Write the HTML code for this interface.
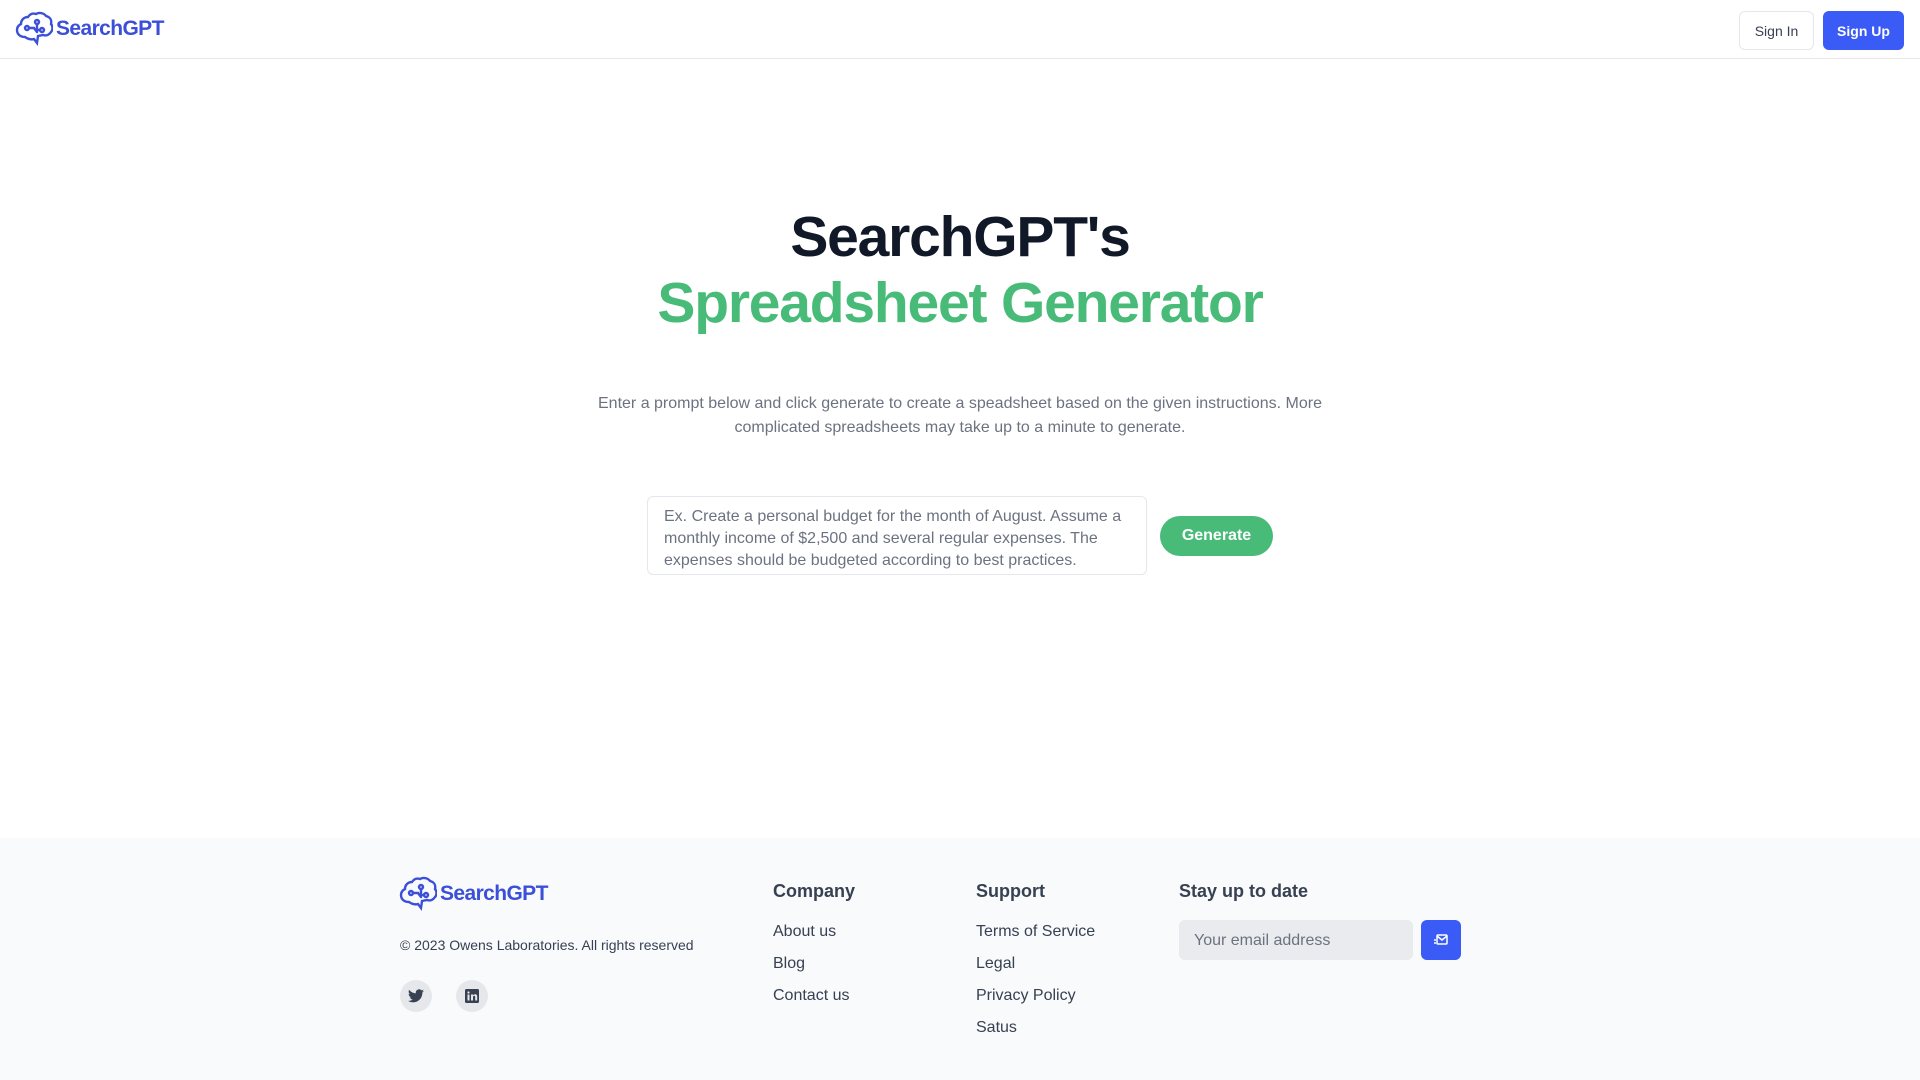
<!DOCTYPE html>
<html><head><meta charset="utf-8"><style>
*{box-sizing:border-box;margin:0;padding:0}
body{width:1920px;height:1080px;overflow:hidden;font-family:"Liberation Sans",sans-serif;background:#fff;color:#1f2937;position:relative}
.abs{position:absolute}
header{position:absolute;left:0;top:0;width:1920px;height:59px;border-bottom:1px solid #e5e7eb}
.logo{display:flex;align-items:center;gap:3px;color:#3b4fd8;font-weight:bold;font-size:21px;letter-spacing:-0.6px}
.btn{position:absolute;border-radius:6px;font-size:14px;display:flex;align-items:center;justify-content:center}
h1{position:absolute;left:0;width:1920px;text-align:center;font-weight:bold;letter-spacing:-1.2px}
footer{position:absolute;left:0;top:838px;width:1920px;height:242px;background:#f8fafc}
.fh{position:absolute;font-size:18px;font-weight:bold;color:#374151}
.fl{position:absolute;font-size:16px;color:#374151}
.soc{position:absolute;width:32px;height:32px;border-radius:50%;background:#e5e7eb;display:flex;align-items:center;justify-content:center}
</style></head><body>
<header>
<div class="logo abs" style="left:15px;top:11px">
<svg width="38" height="36" viewBox="0 0 38 36" fill="none" stroke="#3b4fd8" stroke-width="2.4" stroke-linecap="round"><path d="M10 26c-5 0-8-3-8-7 0-3 2-5 4-6 0-4 3-7 7-7 2-3 5-4 8-3 3-2 8-1 10 2 4 1 6 4 5 8 2 2 2 6 0 8-2 3-5 4-8 3l-5 1-1 7-3-4c-3 1-6 0-9-2z"/><circle cx="12" cy="17" r="2"/><circle cx="22" cy="11" r="2"/><circle cx="27" cy="19" r="2"/><path d="M14 17h5l3 4M22 13v4M25 19h-3"/></svg>
<span>SearchGPT</span></div>
<div class="btn" style="left:1739px;top:11px;width:75px;height:39px;border:1px solid #e5e7eb;color:#374151">Sign In</div>
<div class="btn" style="left:1823px;top:11px;width:81px;height:39px;background:#3b5bf6;color:#fff;font-weight:bold">Sign Up</div>
</header>
<h1 style="top:203px;font-size:57px;color:#111827;line-height:68px">SearchGPT's</h1>
<h1 style="top:269px;font-size:57px;color:#48bb78;line-height:68px">Spreadsheet Generator</h1>
<div class="abs" style="left:590px;width:740px;top:392px;text-align:center;font-size:16px;line-height:24px;color:#6b7280">Enter a prompt below and click generate to create a speadsheet based on the given instructions. More complicated spreadsheets may take up to a minute to generate.</div>
<div class="abs" style="left:647px;top:496px;width:500px;height:79px;border:1px solid #e5e7eb;border-radius:6px;padding:9px 16px;font-size:16px;line-height:22px;color:#6b7280">Ex. Create a personal budget for the month of August. Assume a monthly income of $2,500 and several regular expenses. The expenses should be budgeted according to best practices.</div>
<div class="btn" style="left:1160px;top:516px;width:113px;height:40px;border-radius:20px;background:#48bb78;color:#fff;font-weight:bold;font-size:16px">Generate</div>
<footer>
<div class="logo abs" style="left:399px;top:38px">
<svg width="38" height="36" viewBox="0 0 38 36" fill="none" stroke="#3b4fd8" stroke-width="2.4" stroke-linecap="round"><path d="M10 26c-5 0-8-3-8-7 0-3 2-5 4-6 0-4 3-7 7-7 2-3 5-4 8-3 3-2 8-1 10 2 4 1 6 4 5 8 2 2 2 6 0 8-2 3-5 4-8 3l-5 1-1 7-3-4c-3 1-6 0-9-2z"/><circle cx="12" cy="17" r="2"/><circle cx="22" cy="11" r="2"/><circle cx="27" cy="19" r="2"/><path d="M14 17h5l3 4M22 13v4M25 19h-3"/></svg>
<span>SearchGPT</span></div>
<div class="abs" style="left:400px;top:99px;font-size:14px;color:#374151">© 2023 Owens Laboratories. All rights reserved</div>
<div class="soc" style="left:400px;top:142px"><svg width="16" height="14" viewBox="0 0 24 20"><path fill="#374151" d="M24 2.4a10 10 0 0 1-2.8.8A5 5 0 0 0 23.3.4a10 10 0 0 1-3.1 1.2A4.9 4.9 0 0 0 11.8 6 14 14 0 0 1 1.7.9a4.9 4.9 0 0 0 1.5 6.6A4.9 4.9 0 0 1 1 6.9a4.9 4.9 0 0 0 3.9 4.9 5 5 0 0 1-2.2.1 4.9 4.9 0 0 0 4.6 3.4A9.9 9.9 0 0 1 0 17.3 14 14 0 0 0 7.5 19.5c9.1 0 14-7.5 14-14v-.6A10 10 0 0 0 24 2.4z"/></svg></div>
<div class="soc" style="left:456px;top:142px"><svg width="14" height="14" viewBox="0 0 14 14"><rect width="14" height="14" rx="1.5" fill="#374151"/><rect x="2.5" y="5.5" width="2" height="6" fill="#e5e7eb"/><circle cx="3.5" cy="3.5" r="1.1" fill="#e5e7eb"/><path d="M6 5.5h2v1c.5-.8 1.3-1.2 2.2-1.2 1.4 0 2 .9 2 2.5v3.7h-2V8c0-.8-.3-1.2-.9-1.2S8 7.3 8 8v3.5H6z" fill="#e5e7eb"/></svg></div>
<div class="fh" style="left:773px;top:43px">Company</div>
<div class="fl" style="left:773px;top:85px">About us</div>
<div class="fl" style="left:773px;top:117px">Blog</div>
<div class="fl" style="left:773px;top:149px">Contact us</div>
<div class="fh" style="left:976px;top:43px">Support</div>
<div class="fl" style="left:976px;top:85px">Terms of Service</div>
<div class="fl" style="left:976px;top:117px">Legal</div>
<div class="fl" style="left:976px;top:149px">Privacy Policy</div>
<div class="fl" style="left:976px;top:181px">Satus</div>
<div class="fh" style="left:1179px;top:43px">Stay up to date</div>
<div class="abs" style="left:1179px;top:82px;width:234px;height:40px;border-radius:6px;background:#e9ebee;padding:12px 15px;font-size:16px;color:#6b7280">Your email address</div>
<div class="btn" style="left:1421px;top:82px;width:40px;height:40px;background:#3b5bf6"><svg width="14" height="12" viewBox="0 0 14 12" fill="none" stroke="#fff" stroke-width="1.5"><rect x="3" y="1" width="10" height="9" rx="1"/><path d="M3 2l5 4 5-4M0 6h2M0 9h2"/></svg></div>
</footer>
</body></html>
